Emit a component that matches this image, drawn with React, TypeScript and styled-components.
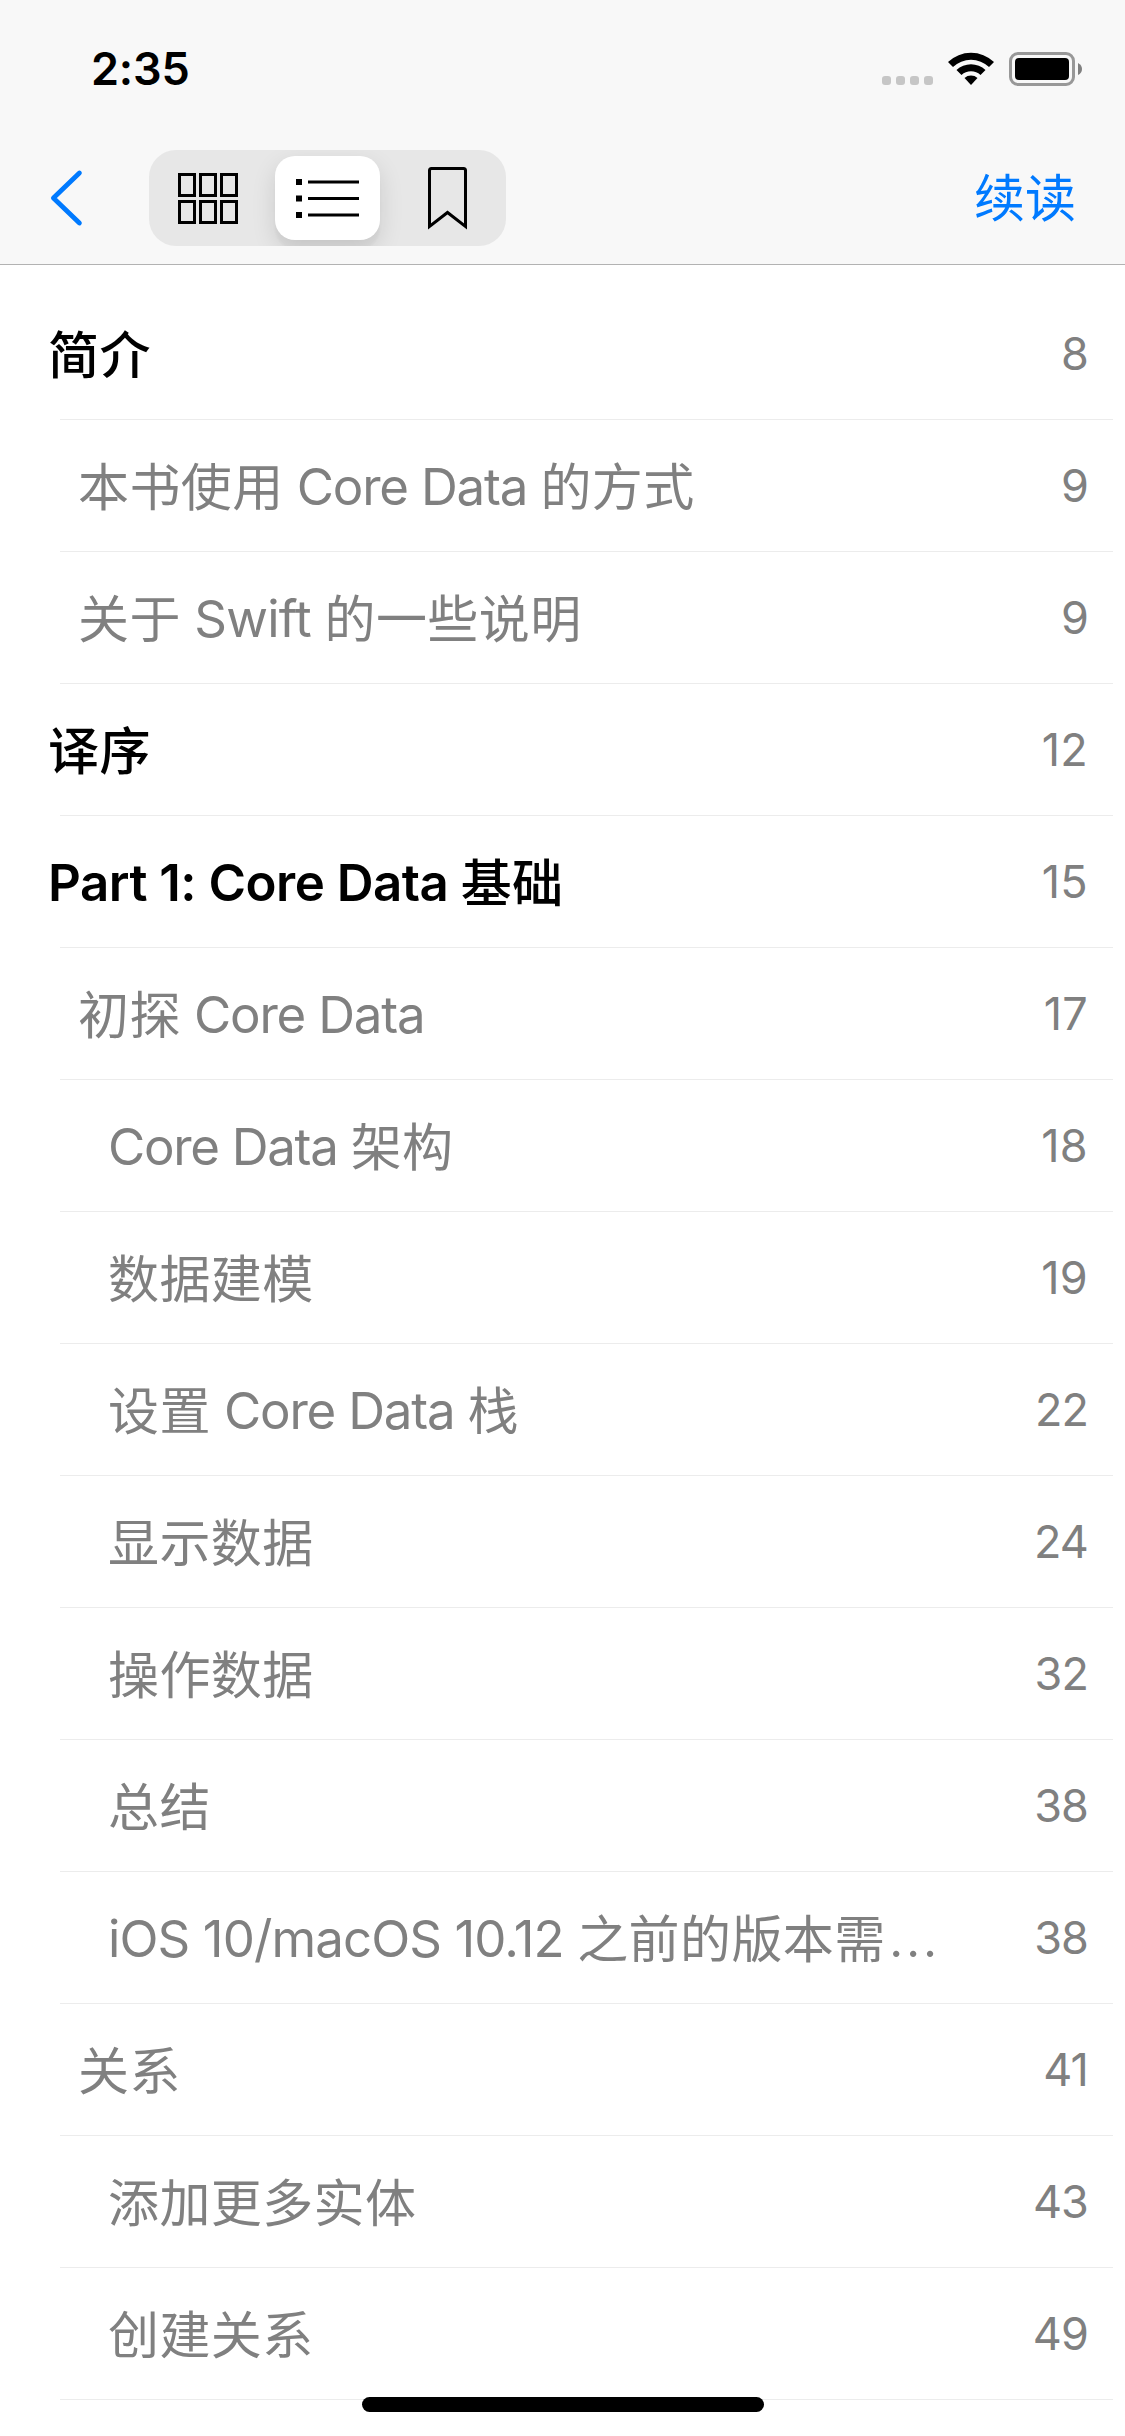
import React from 'react';
import styled, { createGlobalStyle } from 'styled-components';

const GlobalStyle = createGlobalStyle`
  * { box-sizing: border-box; }
  body {
    margin: 0;
    background: #fff;
    font-family: Inter, "Noto Sans CJK SC", sans-serif;
    -webkit-font-smoothing: antialiased;
  }
`;

const Screen = styled.div`
  position: relative;
  width: 1125px;
  height: 2436px;
  overflow: hidden;
  background: #fff;
`;

const Header = styled.header`
  height: 265px;
  background: #f8f8f8;
  border-bottom: 1px solid #b2b2b2;
`;

const StatusBar = styled.div`
  display: flex;
  justify-content: space-between;
  height: 132px;
  padding: 42px 43px 0 91px;
`;

const Clock = styled.time`
  font-size: 45px;
  font-weight: 600;
  line-height: 54px;
  letter-spacing: -0.2px;
`;

const StatusIcons = styled.div`
  display: flex;
  align-items: flex-start;
  padding-top: 10px;
`;

const SignalDots = styled.div`
  display: flex;
  gap: 5px;
  margin: 24px 15px 0 0;
`;

const Dot = styled.i`
  width: 9px;
  height: 9px;
  border-radius: 3px;
  background: #c6c6c6;
`;

const WifiIcon = styled.svg`
  display: block;
  margin-right: 15px;
`;

const BatteryIcon = styled.svg`
  display: block;
`;

const NavBar = styled.nav`
  display: flex;
  align-items: center;
  height: 132px;
  padding: 0 49px 0 48px;
`;

const BackButton = styled.button`
  display: flex;
  width: 101px;
  padding: 0;
  border: 0;
  background: none;
`;

const Segments = styled.div`
  display: grid;
  grid-template-columns: 119.5px 120px 105px;
  align-items: center;
  width: 357px;
  height: 96px;
  padding-left: 6.5px;
  border-radius: 27px;
  background: #e7e7e7;
  overflow: hidden;
`;

const Segment = styled.button<{ $active?: boolean }>`
  display: flex;
  align-items: center;
  justify-content: center;
  width: 105px;
  height: 84px;
  padding: 0;
  border: 0;
  border-radius: 20px;
  background: ${(p) => (p.$active ? '#fff' : 'transparent')};
  box-shadow: ${(p) => (p.$active ? '0 9px 24px rgba(0,0,0,.12), 0 9px 3px rgba(0,0,0,.03)' : 'none')};
`;

const ResumeButton = styled.button`
  margin: 0 0 6px auto;
  padding: 0;
  border: 0;
  background: none;
  color: #007aff;
  font: 400 51px/72px "Noto Sans CJK SC", sans-serif;
`;

const Outline = styled.ul`
  margin: 0;
  padding: 23px 12px 0 60px;
  list-style: none;
`;

const Row = styled.li`
  display: flex;
  align-items: center;
  justify-content: space-between;
  height: 132px;
  padding-right: 25px;
  border-bottom: 1px solid #ececec;
`;

const Title = styled.span<{ $level: number }>`
  margin-left: ${(p) => p.$level * 30 - 12}px;
  padding-top: 2px;
  color: ${(p) => (p.$level === 0 ? '#000' : '#808080')};
  font-size: 51px;
  font-weight: ${(p) => (p.$level === 0 ? 600 : 400)};
  line-height: 72px;
  white-space: pre;
`;

const Han = styled.span<{ $strong: boolean }>`
  font-family: "Noto Sans CJK SC", sans-serif;
  font-weight: ${(p) => (p.$strong ? 500 : 400)};
  line-height: 60px;
  letter-spacing: 0.4px;
  vertical-align: -1px;
`;

const Latin = styled.span<{ $tracking: number }>`
  letter-spacing: ${(p) => p.$tracking}px;
`;

const Ellipsis = styled.span`
  margin-left: 2px;
  font-size: 60px;
  font-weight: 300;
  line-height: 0;
`;

const Page = styled.span<{ $wide: boolean }>`
  padding-top: 1px;
  color: #808080;
  font-size: 45px;
  line-height: 60px;
  letter-spacing: ${(p) => (p.$wide ? 0.3 : -0.9)}px;
`;

const HomeIndicator = styled.div`
  position: absolute;
  left: 362px;
  top: 2397px;
  width: 402px;
  height: 15px;
  border-radius: 8px;
  background: #000;
`;

type Entry = { title: string; page: number; level: number; tracking?: number };

const entries: Entry[] = [
  { title: '简介', page: 8, level: 0 },
  { title: '本书使用 Core Data 的方式', page: 9, level: 1 },
  { title: '关于 Swift 的一些说明', page: 9, level: 1, tracking: -0.8 },
  { title: '译序', page: 12, level: 0 },
  { title: 'Part 1: Core Data 基础', page: 15, level: 0, tracking: -0.5 },
  { title: '初探 Core Data', page: 17, level: 1 },
  { title: 'Core Data 架构', page: 18, level: 2, tracking: -1.3 },
  { title: '数据建模', page: 19, level: 2 },
  { title: '设置 Core Data 栈', page: 22, level: 2 },
  { title: '显示数据', page: 24, level: 2 },
  { title: '操作数据', page: 32, level: 2 },
  { title: '总结', page: 38, level: 2 },
  { title: 'iOS 10/macOS 10.12 之前的版本需…', page: 38, level: 2, tracking: -0.9 },
  { title: '关系', page: 41, level: 1 },
  { title: '添加更多实体', page: 43, level: 2 },
  { title: '创建关系', page: 49, level: 2 },
];

function EntryTitle({ title, level, tracking = -1.2 }: Entry) {
  const runs = title.match(/[\u4e00-\u9fff]+|…|[^\u4e00-\u9fff…]+/g) ?? [];
  return (
    <Title $level={level}>
      {runs.map((run, i) => {
        if (run === '…') return <Ellipsis key={i}>{run}</Ellipsis>;
        if (/[\u4e00-\u9fff]/.test(run)) {
          return (
            <Han key={i} $strong={level === 0}>
              {run}
            </Han>
          );
        }
        return (
          <Latin key={i} $tracking={tracking}>
            {run}
          </Latin>
        );
      })}
    </Title>
  );
}

export default function App() {
  return (
    <Screen>
      <GlobalStyle />
      <Header>
        <StatusBar>
          <Clock>2:35</Clock>
          <StatusIcons>
            <SignalDots>
              <Dot />
              <Dot />
              <Dot />
              <Dot />
            </SignalDots>
            <WifiIcon width="46" height="33" viewBox="0 0 46 33">
              <path d="M0 10 A33.5 33.5 0 0 1 46 10 L41 15 A26 26 0 0 0 5 15 Z" />
              <path d="M8.5 18 A21 21 0 0 1 37.5 18 L32.5 23 A14 14 0 0 0 13.5 23 Z" />
              <path d="M16.5 26 A10 10 0 0 1 29.5 26 L23 33 Z" />
            </WifiIcon>
            <BatteryIcon width="73" height="34" viewBox="0 0 73 34">
              <rect x="1.5" y="1.5" width="63" height="31" rx="7.5" fill="none" stroke="#989898" strokeWidth="3" />
              <rect x="6" y="6" width="54" height="22" rx="4" />
              <path d="M69 11 Q73 13 73 17 Q73 21 69 23 Z" fill="#808080" />
            </BatteryIcon>
          </StatusIcons>
        </StatusBar>
        <NavBar>
          <BackButton aria-label="返回">
            <svg width="36" height="58" viewBox="0 0 36 58">
              <path
                d="M31.4 4 L5.4 29 L31.4 54"
                fill="none"
                stroke="#007aff"
                strokeWidth="4.8"
                strokeLinecap="round"
                strokeLinejoin="round"
              />
            </svg>
          </BackButton>
          <Segments>
            <Segment>
              <svg width="60" height="51" viewBox="0 0 60 51" fill="none" stroke="#000" strokeWidth="3">
                {[0, 27].map((y) =>
                  [0, 21, 42].map((x) => <rect key={`${x}-${y}`} x={x + 1.5} y={y + 1.5} width="15" height="21" />),
                )}
              </svg>
            </Segment>
            <Segment $active>
              <svg width="63" height="39" viewBox="0 0 63 39">
                {[0, 16.5, 33].map((y) => (
                  <g key={y}>
                    <rect x="0" y={y} width="6" height="6" />
                    <rect x="12" y={y + 1.5} width="51" height="3" />
                  </g>
                ))}
              </svg>
            </Segment>
            <Segment>
              <svg width="39" height="63" viewBox="0 0 39 63">
                <path
                  d="M1.5 59.5 V3.5 Q1.5 1.5 3.5 1.5 H35.5 Q37.5 1.5 37.5 3.5 V59.5 L19.5 45.5 Z"
                  fill="none"
                  stroke="#000"
                  strokeWidth="3"
                />
              </svg>
            </Segment>
          </Segments>
          <ResumeButton>续读</ResumeButton>
        </NavBar>
      </Header>
      <Outline>
        {entries.map((e) => (
          <Row key={e.title}>
            <EntryTitle {...e} />
            <Page $wide={e.page > 9 && e.page < 20}>{e.page}</Page>
          </Row>
        ))}
      </Outline>
      <HomeIndicator />
    </Screen>
  );
}
